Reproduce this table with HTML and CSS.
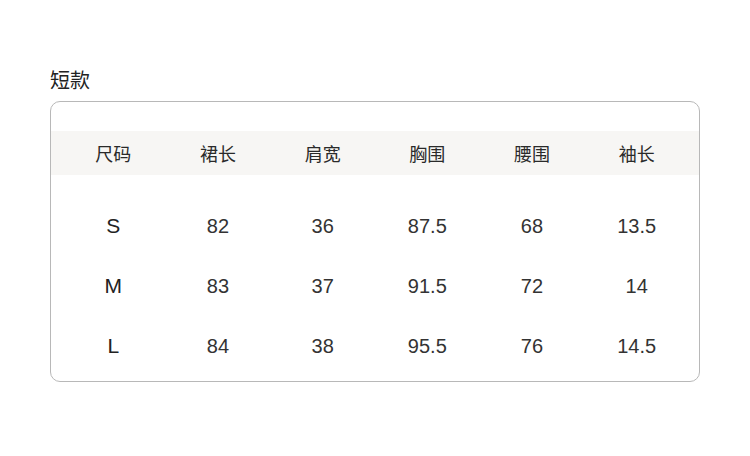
FILE: index.html
```html
<!DOCTYPE html>
<html lang="zh">
<head>
<meta charset="utf-8">
<link rel="stylesheet" href="styles.css">
</head>
<body>
<div class="page">
  <div class="title">短款</div>
  <div class="card">
    <div class="row head">
      <div class="cell">尺码</div>
      <div class="cell">裙长</div>
      <div class="cell">肩宽</div>
      <div class="cell">胸围</div>
      <div class="cell">腰围</div>
      <div class="cell">袖长</div>
    </div>
    <div class="body">
      <div class="row">
        <div class="cell size">S</div><div class="cell">82</div><div class="cell">36</div><div class="cell">87.5</div><div class="cell">68</div><div class="cell">13.5</div>
      </div>
      <div class="row">
        <div class="cell size">M</div><div class="cell">83</div><div class="cell">37</div><div class="cell">91.5</div><div class="cell">72</div><div class="cell">14</div>
      </div>
      <div class="row">
        <div class="cell size">L</div><div class="cell">84</div><div class="cell">38</div><div class="cell">95.5</div><div class="cell">76</div><div class="cell">14.5</div>
      </div>
    </div>
  </div>
</div>
</body>
</html>
```
FILE: styles.css
```css
html, body {
  margin: 0;
  padding: 0;
  background: #ffffff;
}
.page {
  padding: 66px 50px 0 50px;
  width: 650px;
}
.title {
  font-family: "Noto Sans CJK SC", sans-serif;
  font-size: 20px;
  line-height: 28px;
  color: #222;
  margin-bottom: 7px;
}
.card {
  box-sizing: border-box;
  width: 650px;
  height: 281px;
  border: 1px solid #b8b8b8;
  border-radius: 10px;
  padding-top: 29px;
}
.row {
  display: grid;
  grid-template-columns: repeat(6, 1fr);
  padding: 0 10px;
  align-items: center;
  height: 60px;
}
.head {
  height: 44px;
  background: #f7f6f4;
}
.body {
  padding-top: 21px;
}
.cell {
  text-align: center;
  color: #333;
  font-family: "Liberation Sans", Arial, sans-serif;
  font-size: 20px;
}
.cell.size {
  font-size: 21px;
  color: #222;
}
.head .cell {
  font-family: "Noto Sans CJK SC", sans-serif;
  font-size: 18px;
  color: #2a2a2a;
}
```
